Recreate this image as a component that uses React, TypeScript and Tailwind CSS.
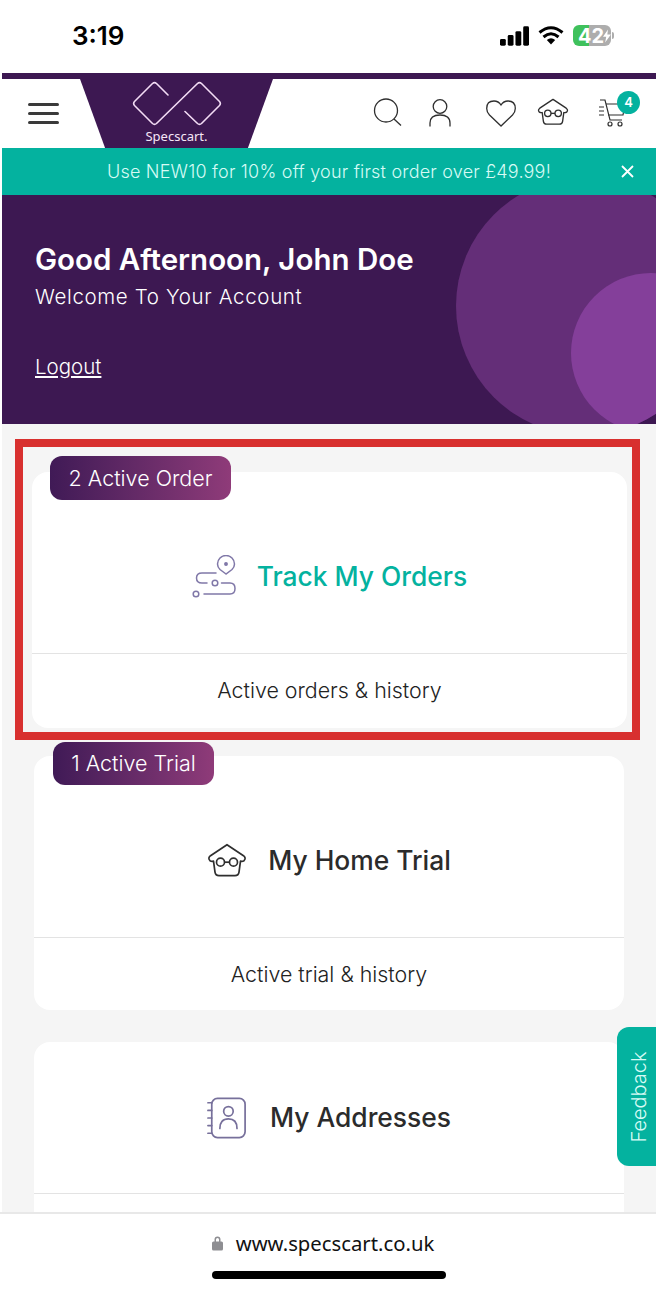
const font = { fontFamily: "Inter, 'Noto Sans', sans-serif" };

function Logo() {
  return (
    <svg width="90" height="46" viewBox="0 0 90 46" fill="none" stroke="#f3dcf5" strokeWidth="1.6" strokeLinejoin="round" strokeLinecap="round">
      <path d="M36 14 L24.500 2.500 Q22.500 0.800 20.500 2.500 L2.500 20.500 Q0.800 22.500 2.500 24.500 L20.500 42.500 Q22.500 44.200 24.500 42.500 L65.500 2.500 Q67.500 0.800 69.500 2.500 L87.500 20.500 Q89.200 22.500 87.500 24.500 L69.500 42.500 Q67.500 44.200 65.500 42.500 L53 30.500" />
    </svg>
  );
}

function HomeTrialIcon({ size = 32 }: { size?: number }) {
  return (
    <svg width={size} height={size * 0.86} viewBox="0 0 40 34" fill="none" stroke="#2f2f2f" strokeWidth="1.7" strokeLinejoin="round">
      <path d="M20 1.500 L36.500 12.500 Q39.500 15 37 17.500 Q35.500 18.500 33.500 18 L32 29 Q31.500 32.500 28 32.500 L12 32.500 Q8.500 32.500 8 29 L6.500 18 Q4.500 18.500 3 17.500 Q0.500 15 3.500 12.500 Z" />
      <circle cx="13.500" cy="19" r="4" />
      <circle cx="26.500" cy="19" r="4" />
      <path d="M17.500 19 H22.500" />
    </svg>
  );
}

function TrackIcon() {
  return (
    <svg width="44" height="44" viewBox="0 0 44 44" fill="none" stroke="#8078a8" strokeWidth="1.500" strokeLinecap="round">
      <path d="M34 19 L28 14.500 Q25.500 12 25.500 9 A8.500 8.500 0 1 1 42.500 9 Q42.500 12 40 14.500 Z" />
      <circle cx="34" cy="9" r="1.200" fill="#8078a8" />
      <path d="M24 18 H10 Q4.500 18 4.500 23 Q4.500 28 10 28 H15" />
      <circle cx="23" cy="28" r="2.800" />
      <path d="M29.500 28 H38 Q43 28 43 33.500 Q43 39 38 39 H12" />
      <circle cx="4" cy="39" r="2.800" />
    </svg>
  );
}

function AddressIcon() {
  return (
    <svg width="40" height="42" viewBox="0 0 42 44" fill="none" stroke="#77709b" strokeWidth="1.800" strokeLinecap="round">
      <rect x="5" y="1.500" width="35" height="41" rx="6" />
      <path d="M1 6 H5 M1 14 H5 M1 22 H5 M1 30 H5 M1 38 H5" />
      <circle cx="22.500" cy="15" r="5" />
      <path d="M13.500 33 Q13.500 23 22.500 23 Q31.500 23 31.500 33" />
    </svg>
  );
}

function OrderCard(props: {
  className: string;
  badge?: string;
  badgeClass?: string;
  title: string;
  titleClass?: string;
  sub?: string;
  subClass: string;
  bodyClass: string;
  icon: React.ReactNode;
}) {
  return (
    <div className={`relative rounded-2xl bg-white ${props.className}`}>
      {props.badge && (
        <span className={`absolute flex items-center justify-center rounded-xl bg-gradient-to-r from-[#401a56] to-[#8f3b79] text-[21.500px] font-light text-white ${props.badgeClass}`}>
          {props.badge}
        </span>
      )}
      <div className={`flex items-center justify-center border-b border-[#e3e3e3] ${props.bodyClass}`}>
        {props.icon}
        <span className={`text-[26.400px] font-[450] ${props.titleClass ?? "text-[#2b2b2b]"}`}>{props.title}</span>
      </div>
      <div className={`flex items-center justify-center text-[21.400px] font-light text-[#222] ${props.subClass}`}>{props.sub}</div>
    </div>
  );
}

export default function App() {
  return (
    <div style={font} className="relative flex h-[1292px] w-[656px] flex-col overflow-hidden bg-white">
      {/* status bar */}
      <div className="flex h-[73px] shrink-0 items-center justify-between pb-[2px] pl-[72px] pr-[42px]">
        <span className="text-[26px] font-semibold leading-none text-black">3:19</span>
        <div className="flex items-center gap-[9px]">
          <svg width="29" height="20" viewBox="0 0 30 20" fill="black">
            <rect x="0" y="13" width="6" height="7" rx="1.500" />
            <rect x="8" y="9" width="6" height="11" rx="1.500" />
            <rect x="16" y="5" width="6" height="15" rx="1.500" />
            <rect x="24" y="0" width="6" height="20" rx="1.500" />
          </svg>
          <svg width="26" height="19" viewBox="0 0 26 19" fill="none" stroke="black" strokeWidth="3">
            <path d="M1.500 6.500 Q13 -3 24.500 6.500" />
            <path d="M5.500 11 Q13 4.500 20.500 11" />
            <path d="M13 18.500 L8.800 14 Q13 10.500 17.200 14 Z" fill="black" stroke="none" />
          </svg>
          <div className="flex items-center">
            <div className="flex h-[21px] w-[38px] items-center overflow-hidden rounded-[6px] bg-gradient-to-r from-[#3fc15c] from-[43%] to-[#adadad] to-[43%] text-[20px] font-bold text-white">
              <span className="ml-[5px] leading-none">42</span>
              <svg width="11" height="18" viewBox="0 0 11 18" fill="white" className="-ml-[1px]">
                <path d="M7 0 L0 10 H4.500 L3 18 L11 7 H6 Z" />
              </svg>
            </div>
            <div className="ml-[1px] h-[7px] w-[2px] rounded-r bg-[#adadad]" />
          </div>
        </div>
      </div>

      {/* page column starts 2px in */}
      <div className="flex min-h-0 flex-1 flex-col pl-[2px]">
        <div className="h-[6px] shrink-0 bg-[#3d1852]" />

        {/* header */}
        <div className="flex h-[69px] shrink-0 items-center bg-white">
          <div className="ml-[26px] flex w-[52px] flex-col gap-[6px]">
            <div className="h-[3px] w-[31px] rounded-full bg-[#3a3a3a]" />
            <div className="h-[3px] w-[31px] rounded-full bg-[#3a3a3a]" />
            <div className="h-[3px] w-[31px] rounded-full bg-[#3a3a3a]" />
          </div>
          <div className="flex h-[69px] w-[193px] flex-col items-center bg-[#3d1852] pt-[2px] [clip-path:polygon(0_0,100%_0,87%_100%,13%_100%)]">
            <Logo />
            <span className="mt-[2px] text-[13px] leading-[14px] text-[#f6e6f7]" style={{ fontFamily: "'Noto Sans', sans-serif" }}>Specscart.</span>
          </div>
          <div className="ml-[100px] flex items-center">
            <svg width="30" height="28" viewBox="0 0 30 28" fill="none" stroke="#2f2f2f" strokeWidth="1.300" className="mb-[2px]">
              <circle cx="13" cy="12.500" r="11.500" />
              <path d="M21 21 L28 27.500" />
            </svg>
            <svg width="22" height="28" viewBox="0 0 22 28" fill="none" stroke="#2f2f2f" strokeWidth="1.300" className="mb-[1px] ml-[26px]">
              <circle cx="11" cy="7.500" r="6.800" />
              <path d="M1 27.500 V24 Q1 16 11 16 Q21 16 21 24 V27.500" />
            </svg>
            <svg width="30" height="27" viewBox="0 0 30 27" fill="none" stroke="#2f2f2f" strokeWidth="1.300" className="ml-[35px]">
              <path d="M15 26 L3.500 15 Q0.700 12 0.700 8.500 Q0.700 1 8 1 Q12.500 1 15 5 Q17.500 1 22 1 Q29.300 1 29.300 8.500 Q29.300 12 26.500 15 Z" />
            </svg>
            <div className="mb-[4px] ml-[21px]">
              <HomeTrialIcon />
            </div>
            <div className="relative ml-[30px]">
              <svg width="27" height="28" viewBox="0 0 27 28" fill="none" stroke="#2f2f2f" strokeWidth="1.200">
                <path d="M1 1 H6 L11 21 H23" />
                <path d="M7 5 H26 L24 16 H9" />
                <path d="M0 8 H5 M0 12 H5 M0 16 H5" />
                <circle cx="11" cy="25" r="2" />
                <circle cx="21" cy="25" r="2" />
              </svg>
              <span className="absolute -right-[14px] -top-[8px] flex h-[23px] w-[23px] items-center justify-center rounded-full bg-[#04b29f] text-[13px] font-semibold text-white">4</span>
            </div>
          </div>
        </div>

        {/* promo banner */}
        <div className="flex h-[47px] shrink-0 items-center bg-[#04b29f] pl-[105px] text-[#d6fbf5]">
          <span className="text-[18px] font-light leading-none tracking-[0.2px]">Use NEW10 for 10% off your first order over £49.99!</span>
          <svg width="13" height="13" viewBox="0 0 13 13" stroke="white" strokeWidth="1.800" className="ml-[70px]">
            <path d="M1 1 L12 12 M12 1 L1 12" />
          </svg>
        </div>

        {/* hero */}
        <div className="relative h-[229px] shrink-0 overflow-hidden bg-[#3d1852] pl-[33px] pt-[46px] text-white">
          <div className="absolute left-[454px] top-[-18px] h-[258px] w-[258px] overflow-hidden rounded-full bg-[#642e78]">
            <div className="absolute left-[115px] top-[96px] h-[160px] w-[160px] rounded-full bg-[#843f9a]" />
          </div>
          <h1 className="relative text-[29.500px] font-semibold leading-[36px]">Good Afternoon, John Doe</h1>
          <p className="relative mt-[6px] text-[20.500px] font-light leading-[28px] tracking-[0.65px]">Welcome To Your Account</p>
          <a className="relative mt-[42px] block w-fit text-[20.500px] font-light leading-[28px] underline underline-offset-2">Logout</a>
        </div>

        {/* account cards */}
        <div className="min-h-0 flex-1 overflow-hidden bg-[#f5f5f5]">
          <OrderCard
            className="ml-[30px] mt-[48px] w-[595px]"
            badge="2 Active Order"
            badgeClass="left-[18px] -top-[16px] h-[44px] w-[181px]"
            title="Track My Orders"
            titleClass="text-[#04b29f]"
            sub="Active orders & history"
            subClass="h-[74px] pb-[2px]"
            bodyClass="h-[182px] gap-[21px] pt-[28px]"
            icon={<TrackIcon />}
          />
          <OrderCard
            className="ml-[32px] mt-[28px] w-[590px]"
            badge="1 Active Trial"
            badgeClass="left-[19px] -top-[14px] h-[43px] w-[161px]"
            title="My Home Trial"
            sub="Active trial & history"
            subClass="h-[72px]"
            bodyClass="h-[182px] gap-[21px] pt-[28px]"
            icon={<HomeTrialIcon size={40} />}
          />
          <OrderCard
            className="ml-[32px] mt-[32px] w-[590px]"
            title="My Addresses"
            subClass="h-[74px]"
            bodyClass="h-[152px] gap-[23px]"
            icon={<AddressIcon />}
          />
        </div>
      </div>

      {/* safari address bar */}
      <div className="flex h-[80px] shrink-0 flex-col items-center border-t-2 border-[#e8e8e8] bg-white">
        <div className="mt-[15px] flex items-center gap-[13px] pr-[10px]">
          <svg width="11" height="16" viewBox="0 0 11 16" fill="#8e8e92">
            <path d="M2.500 7 V4.500 A3 3 0 0 1 8.500 4.500 V7 H7 V4.500 A1.500 1.500 0 0 0 4 4.500 V7 Z" />
            <rect x="0" y="6.500" width="11" height="9" rx="1.500" />
          </svg>
          <span className="text-[20.300px] leading-[28px] text-[#111]" style={{ fontFamily: "'Noto Sans', sans-serif" }}>www.specscart.co.uk</span>
        </div>
        <div className="ml-[2px] mt-[14px] h-[8px] w-[234px] rounded-full bg-black" />
      </div>

      {/* feedback tab */}
      <div className="absolute right-0 top-[1027px] flex h-[139px] w-[39px] items-center justify-center rounded-l-xl bg-[#04b29f] pl-[4px]">
        <span className="-rotate-90 whitespace-nowrap text-[20px] font-light text-[#d6fbf5]">Feedback</span>
      </div>

      {/* red annotation frame */}
      <div className="pointer-events-none absolute left-[15px] top-[439px] h-[301px] w-[625px] border-[8px] border-[#d8302f]" />
    </div>
  );
}
